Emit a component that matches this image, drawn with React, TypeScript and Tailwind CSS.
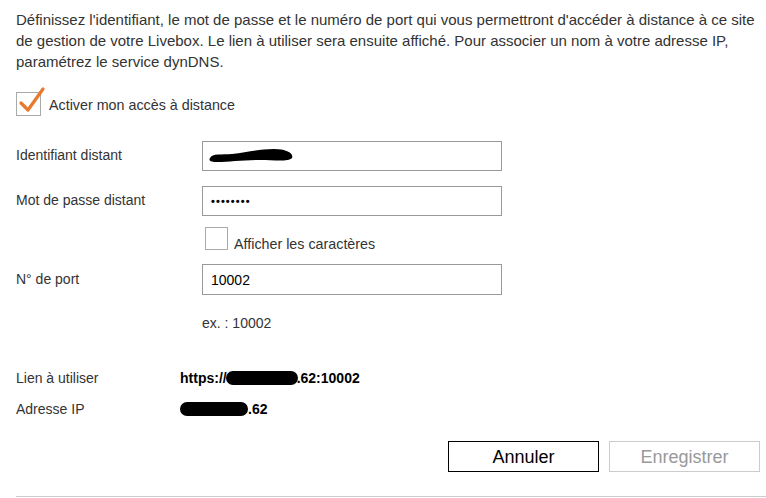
import React from "react";

function Blob({ w, h = 13, className = "" }: { w: number; h?: number; className?: string }) {
  return (
    <span
      className={"inline-block bg-black align-middle " + className}
      style={{ width: w, height: h }}
    />
  );
}

export default function App() {
  return (
    <div
      className="w-[766px] h-[498px] bg-white text-[#333] text-[14px] leading-[20px] overflow-hidden"
      style={{ fontFamily: '"Liberation Sans", Arial, sans-serif' }}
    >
      <div className="pl-[16px] pt-[9px] flex flex-col">
        <p className="text-[15px] leading-[21px] w-[746px]">
          Définissez l'identifiant, le mot de passe et le numéro de port qui vous permettront d'accéder à distance à ce site
          de gestion de votre Livebox. Le lien à utiliser sera ensuite affiché. Pour associer un nom à votre adresse IP,
          paramétrez le service dynDNS.
        </p>

        <div className="mt-[20px] flex items-center h-[24px]">
          <div className="relative w-[25px] h-[24px] border border-[#aaa] bg-white">
            <svg className="absolute left-[1px] top-[-8px]" width="28" height="31" viewBox="0 0 28 31">
              <path d="M3 18 L10 25 L25 4" fill="none" stroke="#e8782c" strokeWidth="3.2" strokeLinecap="round" strokeLinejoin="round" />
            </svg>
          </div>
          <span className="ml-[8px] mt-[2px] text-[14.3px]">Activer mon accès à distance</span>
        </div>

        <div className="mt-[25px] flex items-center">
          <span className="w-[186px] -mt-[2px]">Identifiant distant</span>
          <div className="w-[300px] h-[30px] border border-[#999] flex items-center pl-[5px]">
            <svg width="86" height="16" viewBox="0 0 86 16">
              <path d="M2 10 C4 5 14 7 24 6 C40 4 52 1 66 1 C78 1 86 5 84 10 C80 14 66 12 52 12 C36 12 20 14 10 14 C4 14 0 13 2 10 Z" fill="#000" />
            </svg>
          </div>
        </div>

        <div className="mt-[15px] flex items-center">
          <span className="w-[186px] -mt-[2px]">Mot de passe distant</span>
          <div className="w-[300px] h-[30px] border border-[#999] flex items-center pl-[8px]">
            <span className="text-[11px] tracking-[1.1px] text-black font-bold">••••••••</span>
          </div>
        </div>

        <div className="mt-[11px] flex items-end ml-[189px]">
          <div className="w-[23px] h-[23px] border border-[#aaa] bg-white" />
          <span className="ml-[6px] -mb-[4px] text-[14.3px]">Afficher les caractères</span>
        </div>

        <div className="mt-[14px] flex items-center">
          <span className="w-[186px] -mt-[2px]">N° de port</span>
          <div className="w-[300px] h-[31px] border border-[#999] flex items-center pl-[8px] text-black">10002</div>
        </div>

        <div className="mt-[18px] pl-[186px]">ex. : 10002</div>

        <div className="mt-[35px] flex items-center">
          <span className="w-[164px]">Lien à utiliser</span>
          <span className="font-bold text-black flex items-center">
            https://
            <Blob w={72} h={14} className="-ml-[1px] -mr-[1px] rounded-[7px]" />
            .62:10002
          </span>
        </div>

        <div className="mt-[11px] flex items-center">
          <span className="w-[164px]">Adresse IP</span>
          <span className="font-bold text-black flex items-center">
            <Blob w={68} h={14} className="rounded-[7px]" />
            .62
          </span>
        </div>

        <div className="mt-[22px] flex justify-end pr-[6px] gap-[10px]">
          <button className="w-[151px] h-[31px] border border-black bg-white text-black text-[18px] leading-[20px] flex items-center justify-center">
            Annuler
          </button>
          <button className="w-[151px] h-[31px] border border-[#ccc] bg-white text-[#999] text-[18px] leading-[20px] flex items-center justify-center">
            Enregistrer
          </button>
        </div>

        <div className="mt-[24px] h-px bg-[#ccc]" />
      </div>
    </div>
  );
}
